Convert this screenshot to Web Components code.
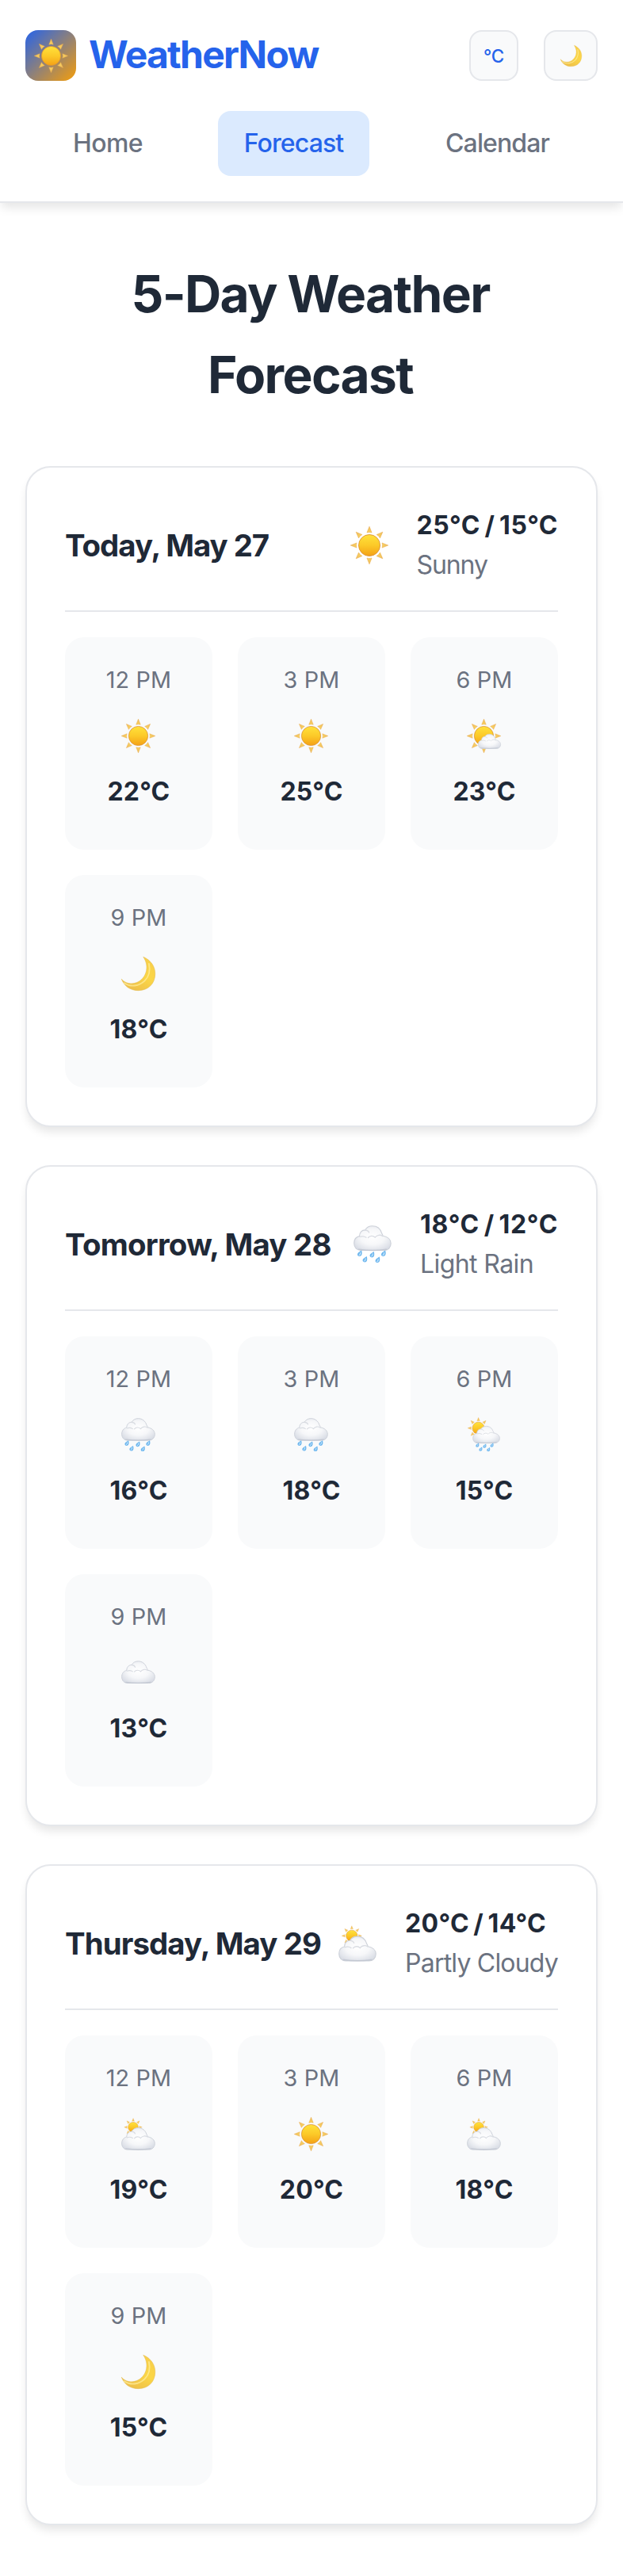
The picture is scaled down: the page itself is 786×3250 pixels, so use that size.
<!DOCTYPE html>
<html lang="en">
<head>
<meta charset="utf-8">
<title>WeatherNow</title>
<style>
html, body { margin: 0; padding: 0; background: #fff; }
body { font-family: Inter, "Liberation Sans", sans-serif; color: #1f2937; }
</style>
</head>
<body>
<weather-app></weather-app>
<script>
const define = (name, html, setup) => {
  const tpl = document.createElement('template');
  tpl.innerHTML = html;
  customElements.define(name, class extends HTMLElement {
    constructor() {
      super();
      this.attachShadow({ mode: 'open' }).append(tpl.content.cloneNode(true));
    }
    connectedCallback() { if (setup) setup(this, this.shadowRoot); }
  });
};

const rays = Array.from({ length: 8 }, (_, i) =>
  `<path d="M24 .2L27.1 8Q24 6.9 20.9 8Z" transform="rotate(${i * 45} 24 24)"/>`).join('');
const SUN = `<g fill="url(#ray)" stroke="#e9a94a" stroke-width=".5" stroke-linejoin="round">${rays}</g>
  <circle cx="24" cy="24" r="13.5" fill="url(#sun)" stroke="#dc9434" stroke-width=".9"/>`;
const CLOUD = `<path d="M9 31.5C4 31.5 .7 27.8 .7 22.6C.7 17.8 3.5 14.4 7.6 13.6C7.6 9 10.6 5.8 14.6 5.9C16.5 2.5 19.8 .7 23.8 .7C29.5 .7 34 4.3 35.6 9.8C36.5 11 36.8 12.1 37.2 13.3C42.7 14.2 47.2 17.6 47.2 22.8C47.2 28 43.6 31.5 38.6 31.5Z" fill="url(#cloud)" stroke="#cdd1d9" stroke-width="1.1"/>
  <path d="M8 14.5Q12.5 12.8 16 15.2M14.6 6Q18.6 6.2 19.6 9M18.5 15.5C20.5 12.8 25 12.6 27.2 15.2C29.8 11.8 34 11.5 37 13.6" fill="none" stroke="#d9dce2" stroke-width="1.3" stroke-linecap="round"/>
  <path d="M6.5 30.2Q24 32.6 41.5 30.2" fill="none" stroke="#bfc4cf" stroke-width="1.5" stroke-linecap="round" opacity=".8"/>`;
const drop = (x, y, s = 1) => `<g transform="translate(${x} ${y}) scale(${s})">
  <path d="M2.5 -4.2C3.6 -.8 3.5 3.6 -.2 3.6C-2.4 3.6 -3.4 1.9 -2.7 .1C-2 -1.7 .6 -2.6 2.5 -4.2Z" fill="#6fb7ee"/>
  <path d="M.9 -1.2Q1.2 1.5 -.6 2" fill="none" stroke="#d6efff" stroke-width="1.1" stroke-linecap="round"/></g>`;
const drops = (list, s) => list.map(([x, y]) => drop(x, y, s)).join('');

const ART = {
  sun: SUN,
  moon: `<path d="M31 .3C42 5 47.7 14 47.7 24C47.7 38 38 47.6 24 47.6C12 47.6 4 41 .3 31.5C6 38 14 39.3 22 36.3C34 31.5 41 15 31 .3Z" fill="url(#moon)" stroke="#e3b94d" stroke-width=".6"/>
    <path d="M4 37C13 43 25 42 33 34C39 28 41 19 39 10" fill="none" stroke="#fff0a0" stroke-width="2" stroke-linecap="round" opacity=".7"/>`,
  cloud: `<g transform="translate(0 7)">${CLOUD}</g>`,
  rain: CLOUD + drops([[7.7, 35.6], [23.3, 37], [37.7, 35.6], [14.3, 43], [30.3, 43.6]], .95),
  partly: `<g transform="translate(16.8 14.3) scale(.53) translate(-24 -24)">${SUN}</g>
    <g transform="translate(0 14.4)">${CLOUD}</g>`,
  suncloud: `${SUN}<g transform="translate(15.5 21) scale(.68 .66)">${CLOUD}</g>`,
  sunrain: `<g transform="translate(16.3 14.3) scale(.63) translate(-24 -24)">${SUN}</g>
    <g transform="translate(8 11) scale(.81 .77)">${CLOUD}</g>
    ${drops([[14.8, 38.4], [25, 39.5], [35.2, 38.4], [19.4, 44], [30.3, 44.4]], .75)}`
};

define('weather-icon', `<style>
  :host { display: block; width: var(--size, 43px); height: var(--size, 43px); flex: none; }
  svg { display: block; width: 100%; height: 100%; overflow: visible; }
</style>
<svg viewBox="0 0 48 48" aria-hidden="true">
  <defs>
    <linearGradient id="sun" x1="0" y1="0" x2="0" y2="1"><stop offset="0" stop-color="#ffe23c"/><stop offset=".5" stop-color="#fcc928"/><stop offset="1" stop-color="#f4a116"/></linearGradient>
    <linearGradient id="ray" x1="0" y1="0" x2="0" y2="1"><stop offset="0" stop-color="#efbd5c"/><stop offset="1" stop-color="#f8d060"/></linearGradient>
    <radialGradient id="cloud" cx=".5" cy=".45" r=".65"><stop offset="0" stop-color="#fff"/><stop offset=".5" stop-color="#f6f7f9"/><stop offset="1" stop-color="#d6dae3"/></radialGradient>
    <linearGradient id="moon" x1=".9" y1=".1" x2=".4" y2="1"><stop offset="0" stop-color="#f8cf4a"/><stop offset=".5" stop-color="#fbd647"/><stop offset="1" stop-color="#eec04a"/></linearGradient>
  </defs>
  <g id="art"></g>
</svg>`, (el, root) => { root.getElementById('art').innerHTML = ART[el.getAttribute('name')] || ''; });

define('app-logo', `<style>
  :host { display: flex; align-items: center; gap: 16px; height: 76px; }
  .mark { display: grid; place-items: center; width: 64px; height: 64px; border-radius: 16px; background: linear-gradient(135deg, #2563eb, #f59e0b); }
  .name { font-size: 48px; line-height: 74px; padding-bottom: 2px; font-weight: 700; letter-spacing: -1.75px; color: #2563eb; white-space: nowrap; }
</style><div class="mark"><weather-icon name="sun"></weather-icon></div><div class="name"><slot></slot></div>`);

define('tool-button', `<style>
  :host { display: flex; align-items: center; justify-content: center; box-sizing: border-box; width: 62px; height: 64px; border: 2px solid #e5e7eb; border-radius: 16px; background: #f9fafb; color: #2563eb; font-size: 22.4px; font-weight: 500; letter-spacing: -.1px; }
  :host([wide]) { width: 68px; --size: 27px; }
</style><slot></slot>`);

define('nav-item', `<style>
  :host { display: block; box-sizing: border-box; width: var(--w); padding: 16px 0; border-radius: 16px; font-size: 32px; line-height: 50px; font-weight: 450; letter-spacing: var(--ls, -.9px); text-align: center; color: #6b7280; }
  :host([active]) { background: #dbeafe; color: #2563eb; }
</style><slot></slot>`);

define('app-header', `<style>
  :host { display: block; box-sizing: border-box; height: 256px; padding: 32px 32px 0; background: #fff; border-bottom: 2px solid #e5e7eb; box-shadow: 0 8px 12px -2px rgba(0,0,0,.1); }
  .top { display: flex; align-items: center; justify-content: space-between; height: 76px; margin-bottom: 32px; }
  .tools { display: flex; gap: 32px; }
  nav { display: flex; justify-content: center; gap: 65px; }
</style>
<div class="top"><app-logo>WeatherNow</app-logo><div class="tools"><tool-button>°C</tool-button><tool-button wide><weather-icon name="moon"></weather-icon></tool-button></div></div>
<nav><nav-item style="--w:148px;--ls:-.6px">Home</nav-item><nav-item active style="--w:191px">Forecast</nav-item><nav-item style="--w:193px">Calendar</nav-item></nav>`);

define('hour-tile', `<style>
  :host { display: flex; flex-direction: column; align-items: center; box-sizing: border-box; height: 268px; padding-top: 31px; border-radius: 24px; background: #f9fafb; }
  .time { font-size: 28.8px; line-height: 45px; letter-spacing: .15px; color: #6b7280; }
  weather-icon { margin: 27px 2px 23px 0; }
  .temp { font-size: 32px; line-height: 51px; font-weight: 700; letter-spacing: .2px; }
</style><div class="time"></div><weather-icon></weather-icon><div class="temp"><slot></slot></div>`, (el, root) => {
  root.querySelector('.time').textContent = el.getAttribute('time');
  const icon = root.querySelector('weather-icon');
  const fresh = document.createElement('weather-icon');
  fresh.setAttribute('name', el.getAttribute('icon'));
  icon.replaceWith(fresh);
});

define('day-card', `<style>
  :host { display: block; box-sizing: border-box; height: 834px; padding: 48px; border: 2px solid #e5e7eb; border-radius: 32px; background: #fff; box-shadow: 0 8px 12px -2px rgba(0,0,0,.1); }
  header { display: flex; justify-content: space-between; align-items: center; height: 100px; padding-bottom: 32px; border-bottom: 2px solid #e5e7eb; margin-bottom: 32px; }
  h2 { margin: 0; font-size: 38.4px; line-height: 62px; font-weight: 700; letter-spacing: var(--date-ls, -.75px); white-space: nowrap; }
  .info { display: flex; align-items: center; gap: 36px; --size: 48px; }
  .range, .sky { font-size: 32px; line-height: 50px; white-space: nowrap; }
  .range { font-weight: 700; letter-spacing: var(--range-ls, .5px); word-spacing: -2.4px; }
  .sky { color: #6b7280; letter-spacing: var(--sky-ls, -.8px); }
  .hours { display: grid; grid-template-columns: repeat(3, 186px); gap: 32px; }
</style>
<header><h2></h2><div class="info"><span id="icon"></span><div><div class="range"></div><div class="sky"></div></div></div></header>
<div class="hours"><slot></slot></div>`, (el, root) => {
  root.querySelector('h2').textContent = el.getAttribute('date');
  root.querySelector('.range').textContent = el.getAttribute('range');
  root.querySelector('.sky').textContent = el.getAttribute('sky');
  const icon = document.createElement('weather-icon');
  icon.setAttribute('name', el.getAttribute('icon'));
  root.getElementById('icon').replaceWith(icon);
});

define('weather-app', `<style>
  :host { display: block; }
  main { padding: 64px 32px; }
  h1 { width: 560px; margin: 0 auto 64px; padding-right: 3px; font-size: 64px; line-height: 102px; font-weight: 700; letter-spacing: -1.65px; text-align: center; }
  .days { display: grid; gap: 48px; }
</style>
<app-header></app-header>
<main>
  <h1>5-Day Weather Forecast</h1>
  <div class="days">
    <day-card date="Today, May 27" icon="sun" range="25°C / 15°C" sky="Sunny" style="--date-ls:-1.03px;--sky-ls:-1.1px">
      <hour-tile time="12 PM" icon="sun">22°C</hour-tile>
      <hour-tile time="3 PM" icon="sun">25°C</hour-tile>
      <hour-tile time="6 PM" icon="suncloud">23°C</hour-tile>
      <hour-tile time="9 PM" icon="moon">18°C</hour-tile>
    </day-card>
    <day-card date="Tomorrow, May 28" icon="rain" range="18°C / 12°C" sky="Light Rain" style="--range-ls:.65px;--sky-ls:-.6px">
      <hour-tile time="12 PM" icon="rain">16°C</hour-tile>
      <hour-tile time="3 PM" icon="rain">18°C</hour-tile>
      <hour-tile time="6 PM" icon="sunrain">15°C</hour-tile>
      <hour-tile time="9 PM" icon="cloud">13°C</hour-tile>
    </day-card>
    <day-card date="Thursday, May 29" icon="partly" range="20°C / 14°C" sky="Partly Cloudy" style="--date-ls:-.9px;--range-ls:.3px">
      <hour-tile time="12 PM" icon="partly">19°C</hour-tile>
      <hour-tile time="3 PM" icon="sun">20°C</hour-tile>
      <hour-tile time="6 PM" icon="partly">18°C</hour-tile>
      <hour-tile time="9 PM" icon="moon">15°C</hour-tile>
    </day-card>
  </div>
</main>`);
</script>
</body>
</html>
